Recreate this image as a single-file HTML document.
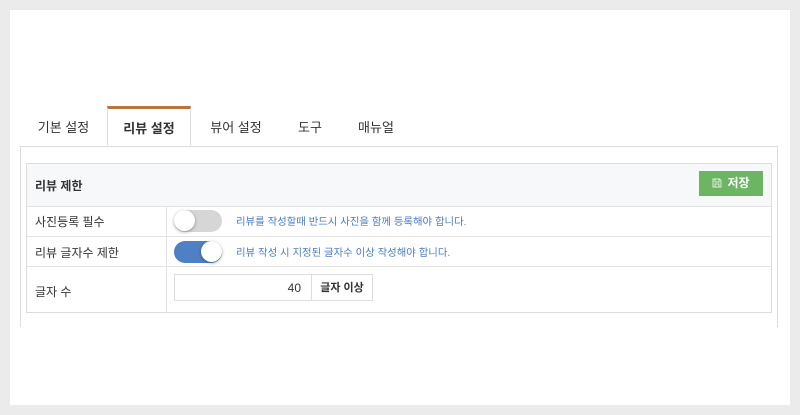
<!DOCTYPE html>
<html><head><meta charset="utf-8"><style>
body{margin:0;width:800px;height:415px;background:#ebebeb;font-family:"Liberation Sans","Noto Sans CJK KR",sans-serif;position:relative;overflow:hidden}
.card{position:absolute;left:10px;top:10px;width:780px;height:395px;background:#fff}
.abs{position:absolute}
.tab{position:absolute;top:106px;height:40px;line-height:44px;font-size:13px;color:#333;text-align:center}
.panel{position:absolute;left:20px;top:146px;width:756px;height:180px;border:1px solid #ddd;border-bottom:none;background:#fff}
.tbl{position:absolute;left:26px;top:163px;width:744px;height:148px;border:1px solid #ddd;background:#fff}
.row{position:absolute;left:0;width:744px;border-top:1px solid #e3e3e3}
.lbl{position:absolute;left:8px;font-size:12px;color:#333}
.sep{position:absolute;left:139px;top:42px;width:1px;height:106px;background:#e3e3e3}
.desc{position:absolute;left:209px;font-size:10.4px;color:#4a7fc1}
.tg{position:absolute;left:147px;width:48px;height:22px;border-radius:11px}
.knob{position:absolute;top:0;width:21px;height:21px;border-radius:50%;background:#fff;box-shadow:0 1px 3px rgba(0,0,0,.35)}
</style></head><body>
<div class="card"></div>
<div class="abs" style="left:20px;top:146px;width:87px;height:1px;background:#ddd"></div>
<div class="tab" style="left:26px;width:75px">기본 설정</div>
<div class="tab" style="left:107px;width:84px;top:106px;height:40px;border:1px solid #ddd;border-top:3px solid #b8763f;border-bottom:1px solid #fff;box-sizing:border-box;background:#fff;font-weight:bold;line-height:40px;z-index:2">리뷰 설정</div>
<div class="tab" style="left:200px;width:72px">뷰어 설정</div>
<div class="tab" style="left:290px;width:40px">도구</div>
<div class="tab" style="left:350px;width:52px">매뉴얼</div>
<div class="panel"></div>
<div class="tbl">
 <div class="row" style="top:0;height:42px;border-top:none;background:#f7f8fa"></div>
 <div class="lbl" style="top:13px;font-weight:bold">리뷰 제한</div>
 <div class="abs" style="left:672px;top:7px;width:64px;height:25px;background:#6cb562;color:#fff;font-size:12px;font-weight:bold;line-height:25px;text-align:center">
  <svg width="10" height="10" viewBox="0 0 10 10" style="vertical-align:-1px;margin-right:5px"><path d="M1 1h6.5L9 2.5V9H1z M3 1v3h4V1 M3 9V6h4v3" fill="none" stroke="#dfeedd" stroke-width="1"/></svg>저장</div>
 <div class="row" style="top:42px;height:30px"></div>
 <div class="lbl" style="top:49px">사진등록 필수</div>
 <div class="tg" style="top:46px;background:#d6d6d6"><div class="knob" style="left:0"></div></div>
 <div class="desc" style="top:49px">리뷰를 작성할때 반드시 사진을 함께 등록해야 합니다.</div>
 <div class="row" style="top:72px;height:30px"></div>
 <div class="lbl" style="top:80px">리뷰 글자수 제한</div>
 <div class="tg" style="top:77px;background:#4f80c4"><div class="knob" style="left:27px"></div></div>
 <div class="desc" style="top:80px">리뷰 작성 시 지정된 글자수 이상 작성해야 합니다.</div>
 <div class="row" style="top:102px;height:46px"></div>
 <div class="lbl" style="top:119px">글자 수</div>
 <div class="sep"></div>
 <div class="abs" style="left:147px;top:110px;width:138px;height:27px;border:1px solid #ddd;box-sizing:border-box;font-size:12px;line-height:27px;text-align:right;padding-right:10px;color:#333">40</div>
 <div class="abs" style="left:285px;top:110px;width:61px;height:27px;border:1px solid #ddd;border-left:none;box-sizing:border-box;font-size:11px;font-weight:bold;line-height:27px;text-align:center;color:#333">글자 이상</div>
</div>
</body></html>
